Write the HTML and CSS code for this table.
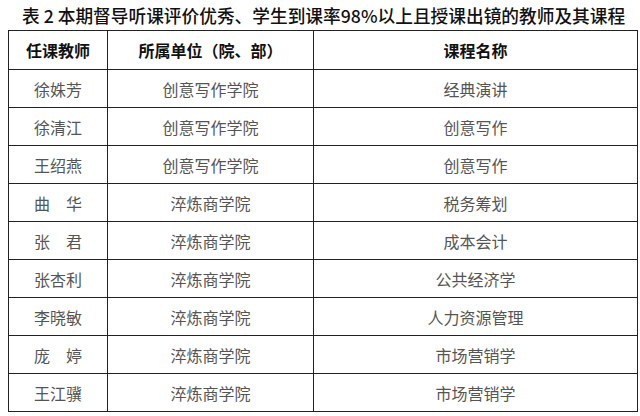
FILE: index.html
```html
<!DOCTYPE html>
<html lang="zh-CN">
<head>
<meta charset="utf-8">
<title>表2</title>
<link rel="stylesheet" href="styles.css">
</head>
<body>
<div class="page">
  <h1 class="caption">表 2 本期督导听课评价优秀、学生到课率98%以上且授课出镜的教师及其课程</h1>
  <table class="grid">
    <colgroup>
      <col class="c1"><col class="c2"><col class="c3">
    </colgroup>
    <thead>
      <tr class="head"><th>任课教师</th><th>所属单位（院、部）</th><th>课程名称</th></tr>
    </thead>
    <tbody>
      <tr><td>徐姝芳</td><td>创意写作学院</td><td>经典演讲</td></tr>
      <tr><td>徐清江</td><td>创意写作学院</td><td>创意写作</td></tr>
      <tr><td>王绍燕</td><td>创意写作学院</td><td>创意写作</td></tr>
      <tr><td>曲　华</td><td>淬炼商学院</td><td>税务筹划</td></tr>
      <tr><td>张　君</td><td>淬炼商学院</td><td>成本会计</td></tr>
      <tr><td>张杏利</td><td>淬炼商学院</td><td>公共经济学</td></tr>
      <tr><td>李晓敏</td><td>淬炼商学院</td><td>人力资源管理</td></tr>
      <tr><td>庞　婷</td><td>淬炼商学院</td><td>市场营销学</td></tr>
      <tr><td>王江骥</td><td>淬炼商学院</td><td>市场营销学</td></tr>
    </tbody>
  </table>
</div>
</body>
</html>
```
FILE: styles.css
```css
html, body {
  margin: 0;
  padding: 0;
  background: #fff;
}
.page {
  width: 640px;
  padding: 0 0 0 8px;
  box-sizing: border-box;
  font-family: "Noto Sans CJK SC", "Liberation Sans", sans-serif;
}
.caption {
  margin: 0;
  height: 30px;
  line-height: 31px;
  padding-left: 14px;
  font-size: 17.7px;
  font-weight: 500;
  color: #111;
  white-space: nowrap;
  letter-spacing: 0;
}
.grid {
  border-collapse: collapse;
  width: 629px;
  table-layout: fixed;
}
.c1 { width: 99px; }
.c2 { width: 206px; }
.c3 { width: 324px; }
.grid th, .grid td {
  border: 1px solid #222;
  padding: 0;
  text-align: center;
  font-size: 16px;
  line-height: 20px;
}
.grid th {
  height: 38px;
  font-weight: 700;
  color: #111;
}
.grid td {
  height: 37px;
  font-weight: 400;
  color: #555;
}
```
